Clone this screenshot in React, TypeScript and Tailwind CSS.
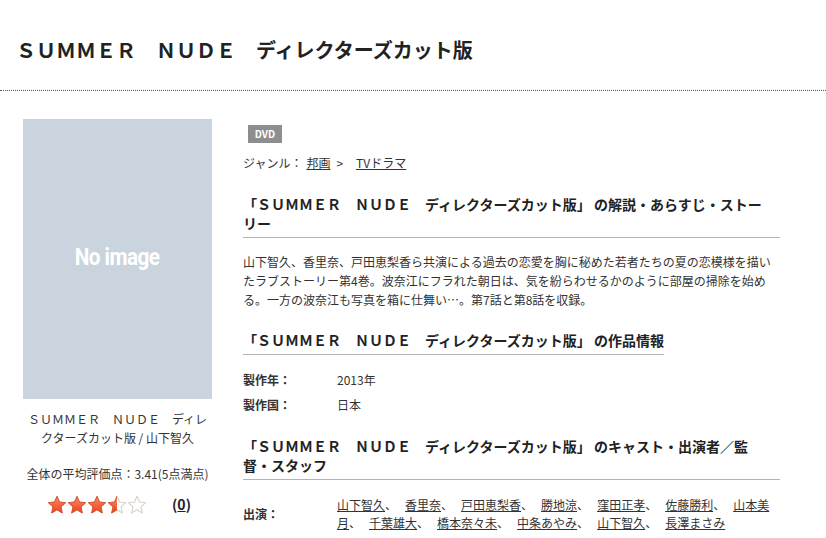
const TITLE = "ＳＵＭＭＥＲ　ＮＵＤＥ　ディレクターズカット版";

const CAST_LINE = [
  "山下智久",
  "香里奈",
  "戸田恵梨香",
  "勝地涼",
  "窪田正孝",
  "佐藤勝利",
  "山本美月",
  "千葉雄大",
  "橋本奈々未",
  "中条あやみ",
  "山下智久",
  "長澤まさみ",
];

const STAR_POINTS =
  "12,1.6 15,8.4 22.4,9.2 16.8,14.2 18.4,21.6 12,17.8 5.6,21.6 7.2,14.2 1.6,9.2 9,8.4";

function Star({ fill, id }: { fill: number; id: string }) {
  // fill: 1 full, 0.5 half, 0 empty
  return (
    <svg width="20" height="20" viewBox="0 0 24 24">
      <defs>
        <linearGradient id={`g-${id}`} x1="0" y1="0" x2="0" y2="1">
          <stop offset="0" stopColor="#ff8a6a" />
          <stop offset="1" stopColor="#e8431f" />
        </linearGradient>
        <clipPath id={`c-${id}`}>
          <rect x="0" y="0" width={24 * fill} height="24" />
        </clipPath>
      </defs>
      <polygon points={STAR_POINTS} fill="#fff" stroke="#d9d0c2" strokeWidth="1.3" strokeLinejoin="round" />
      {fill > 0 && (
        <polygon
          points={STAR_POINTS}
          fill={`url(#g-${id})`}
          stroke="#d2441f"
          strokeWidth="1"
          strokeLinejoin="round"
          clipPath={`url(#c-${id})`}
        />
      )}
    </svg>
  );
}

function SectionHeading({ children, full }: { children: React.ReactNode; full?: boolean }) {
  return (
    <h2
      className={`border-b border-[#b4b4b4] pb-[4px] text-[14px] font-bold leading-[19px] text-[#222] ${
        full ? "block pr-[6px]" : "inline-block"
      }`}
    >
      {children}
    </h2>
  );
}

export default function App() {
  return (
    <div
      lang="ja"
      className="min-h-[538px] w-[826px] bg-white text-[#333] [line-break:strict] [text-spacing-trim:space-all]"
      style={{ fontFamily: '"Noto Sans CJK JP", "Noto Sans", sans-serif' }}
    >
      <h1 className="border-b border-dotted border-[#555] pl-[16px] pt-[36px] pb-[26px] text-[20px] font-bold leading-[28px] text-[#222]">
        {TITLE}
      </h1>

      <div className="flex pl-[23px] pt-[28px]">
        {/* left column */}
        <div className="w-[189px] shrink-0">
          <div className="flex h-[280px] items-center justify-center bg-[#cad4de]">
            <span
              className="mt-[-2px] scale-x-90 text-[23px] font-bold tracking-tight text-white"
              style={{ fontFamily: "Roboto, sans-serif" }}
            >
              No image
            </span>
          </div>
          <p className="mt-[10px] text-center text-[12px] leading-[19px]">
            {TITLE} / 山下智久
          </p>
          <p className="mt-[17px] whitespace-nowrap text-center text-[12px] leading-[19px]">
            全体の平均評価点：3.41(5点満点)
          </p>
          <div className="mt-[11px] flex items-center justify-center gap-[25px] pl-[3px]">
            <div className="flex">
              <Star fill={1} id="s1" />
              <Star fill={1} id="s2" />
              <Star fill={1} id="s3" />
              <Star fill={0.5} id="s4" />
              <Star fill={0} id="s5" />
            </div>
            <span className="text-[14px] font-bold text-[#222]">
              (<span className="underline">0</span>)
            </span>
          </div>
        </div>

        {/* right column */}
        <div className="ml-[31px] w-[537px]">
          <span className="ml-[5px] mt-[3px] inline-flex h-[18px] w-[34px] items-center justify-center bg-[#8e8e8e] text-[10px] font-bold text-white">
            DVD
          </span>
          <p className="mt-[11px] text-[12px] leading-[18px]">
            ジャンル：
            <a className="ml-[4px] underline">邦画</a>
            <span className="ml-[6px] mr-[13px]">&gt;</span>
            <a className="underline">TVドラマ</a>
          </p>

          <div className="mt-[23px]">
            <SectionHeading full>「{TITLE}」 の解説・あらすじ・ストーリー</SectionHeading>
          </div>
          <p className="mt-[14px] text-[12px] leading-[19px]">
            山下智久、香里奈、戸田恵梨香ら共演による過去の恋愛を胸に秘めた若者たちの夏の恋模様を描いたラブストーリー第4巻。波奈江にフラれた朝日は、気を紛らわせるかのように部屋の掃除を始める。一方の波奈江も写真を箱に仕舞い…。第7話と第8話を収録。
          </p>

          <div className="mt-[18px]">
            <SectionHeading>「{TITLE}」 の作品情報</SectionHeading>
          </div>
          <div className="mt-[15px] flex flex-col gap-[6px] text-[12px] leading-[19px]">
            <div className="flex">
              <span className="w-[94px] shrink-0 font-bold">製作年：</span>
              <span>2013年</span>
            </div>
            <div className="flex">
              <span className="w-[94px] shrink-0 font-bold">製作国：</span>
              <span>日本</span>
            </div>
          </div>

          <div className="mt-[23px]">
            <SectionHeading full>「{TITLE}」 のキャスト・出演者／監督・スタッフ</SectionHeading>
          </div>
          <div className="mt-[16px] flex items-center text-[12px] leading-[18px]">
            <span className="w-[94px] shrink-0 font-bold">出演：</span>
            <p className="w-[440px]">
              {CAST_LINE.map((name, i) => (
                <span key={i}>
                  <a className="underline">{name}</a>
                  {i < CAST_LINE.length - 1 && <span className="mr-[8px]">、</span>}
                </span>
              ))}
            </p>
          </div>
        </div>
      </div>
    </div>
  );
}
